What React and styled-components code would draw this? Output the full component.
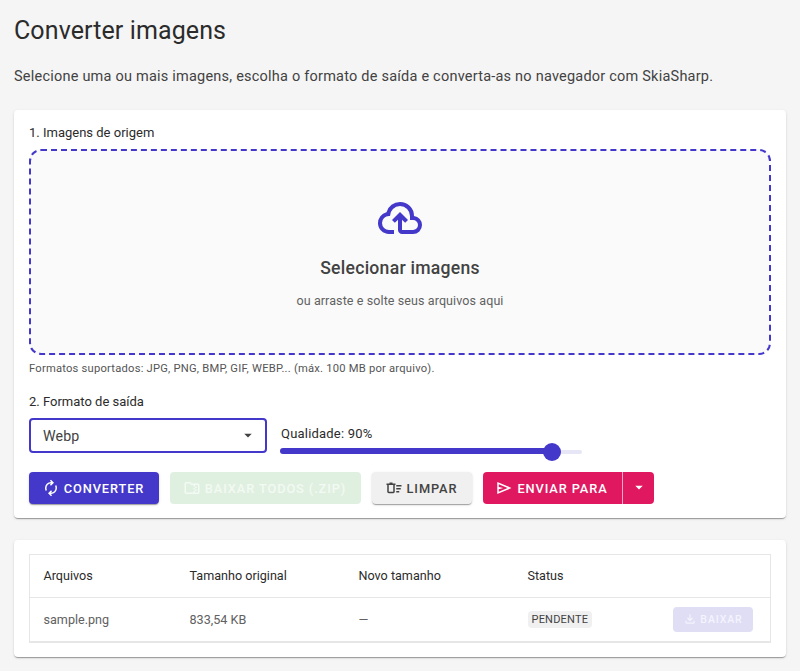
import React from 'react';
import styled, { createGlobalStyle } from 'styled-components';

const PRIMARY = '#4338ca';

const GlobalStyle = createGlobalStyle`
  html, body { margin: 0; padding: 0; background: #f5f5f5; }
  body { font-family: Roboto, "Liberation Sans", sans-serif; color: #424242; }
`;

const Page = styled.main`
  padding: 14px 14px 14px;
  display: flex;
  flex-direction: column;
`;

const Title = styled.h1`
  margin: 0;
  font-size: 25px;
  line-height: 34px;
  font-weight: 400;
  letter-spacing: 0.1px;
  color: #2b2b2b;
`;

const Intro = styled.p`
  margin: 18px 0 0;
  font-size: 14.5px;
  line-height: 22px;
  letter-spacing: 0.22px;
  color: #424242;
`;

const Card = styled.section`
  background: #fff;
  border-radius: 4px;
  box-shadow: 0 2px 1px -1px rgba(0,0,0,.2), 0 1px 1px 0 rgba(0,0,0,.14), 0 1px 3px 0 rgba(0,0,0,.12);
  padding: 14px 15px;
  margin-top: ${(p) => p.$top}px;
`;

const SectionLabel = styled.div`
  font-size: 13px;
  line-height: 18px;
  color: #2b2b2b;
`;

const DropZone = styled.div`
  margin-top: 7px;
  height: 206px;
  box-sizing: border-box;
  border: 2px dashed ${PRIMARY};
  border-radius: 12px;
  background: #fafafa;
  display: flex;
  flex-direction: column;
  align-items: center;
  color: ${PRIMARY};
`;

const ZoneIcon = styled.svg`
  width: 48px;
  height: 48px;
  margin-top: 43px;
  fill: currentColor;
`;

const ZoneTitle = styled.div`
  margin-top: 14px;
  font-size: 17.6px;
  line-height: 24px;
  font-weight: 500;
  letter-spacing: 0.25px;
  color: #424242;
`;

const ZoneHint = styled.div`
  margin-top: 11px;
  font-size: 12.5px;
  line-height: 20px;
  letter-spacing: 0.1px;
  color: #616161;
`;

const Helper = styled.div`
  margin-top: 6px;
  font-size: 11.2px;
  line-height: 16px;
  letter-spacing: 0.22px;
  color: #555;
`;

const FormatLabel = styled(SectionLabel)`
  margin-top: 16px;
`;

const FormatRow = styled.div`
  margin-top: 7px;
  display: flex;
  gap: 13px;
  align-items: stretch;
`;

const SelectBox = styled.div`
  width: 238px;
  height: 35px;
  box-sizing: border-box;
  border: 2px solid ${PRIMARY};
  border-radius: 4px;
  display: flex;
  align-items: center;
  justify-content: space-between;
  padding: 0 8px 0 12px;
  font-size: 14.2px;
  letter-spacing: 0.15px;
  color: #424242;
`;

const Caret = styled.svg`
  width: 18px;
  height: 18px;
  fill: ${(p) => p.$color || '#424242'};
  flex: none;
`;

const Quality = styled.div`
  width: 302px;
  display: flex;
  flex-direction: column;
  justify-content: space-between;
`;

const QualityLabel = styled.div`
  font-size: 13px;
  line-height: 18px;
  letter-spacing: 0.2px;
  margin-top: 7px;
  padding-left: 1px;
  color: #2b2b2b;
`;

const Track = styled.div`
  position: relative;
  height: 4px;
  margin-bottom: -1px;
  border-radius: 2px;
  background: #e7e6f7;
`;

const TrackFill = styled.div`
  height: 6px;
  margin-top: -1px;
  position: relative;
  top: -1px;
  border-radius: 3px;
  background: ${PRIMARY};
`;

const Thumb = styled.div`
  position: absolute;
  top: -7px;
  width: 18px;
  height: 18px;
  margin-left: -9px;
  border-radius: 50%;
  background: ${PRIMARY};
`;

const Actions = styled.div`
  margin-top: 19px;
  display: flex;
  gap: 11px;
`;

const Button = styled.button`
  height: 32px;
  width: ${(p) => p.$width}px;
  box-sizing: border-box;
  border: 0;
  border-radius: 4px;
  padding: 0 2px 0 0;
  display: flex;
  align-items: center;
  justify-content: center;
  gap: 4px;
  font-family: inherit;
  font-size: 12.8px;
  font-weight: 500;
  letter-spacing: 0.9px;
  text-transform: uppercase;
  background: ${(p) => p.$bg};
  color: ${(p) => p.$fg};
  box-shadow: ${(p) => (p.$flat ? 'none' : '0 2px 1px -1px rgba(0,0,0,.2), 0 1px 1px 0 rgba(0,0,0,.14), 0 1px 3px 0 rgba(0,0,0,.12)')};
`;

const BtnIcon = styled.svg`
  width: 18px;
  height: 18px;
  fill: currentColor;
  flex: none;
`;

const SplitGroup = styled.div`
  display: flex;
`;

const SplitMain = styled(Button)`
  border-radius: 4px 0 0 4px;
  box-shadow: none;
`;

const SplitToggle = styled(Button)`
  border-radius: 0 4px 4px 0;
  border-left: 1px solid #f6a9c4;
  padding: 0;
  box-shadow: none;
`;

const TableFrame = styled.div`
  border: 1px solid #e6e6e6;
  border-bottom-width: 2px;
`;

const Table = styled.table`
  width: 100%;
  border-collapse: collapse;
  table-layout: fixed;
  font-size: 12.6px;
`;

const HeadCell = styled.th`
  width: ${(p) => (p.$width ? `${p.$width}px` : 'auto')};
  box-sizing: border-box;
  height: 42px;
  padding: 0 0 0 13.5px;
  text-align: left;
  font-weight: 400;
  color: #2b2b2b;
  border-bottom: 1px solid #e6e6e6;
`;

const Cell = styled.td`
  box-sizing: border-box;
  height: 44px;
  padding: 0 0 0 13.5px;
  color: #616161;
`;

const ActionCell = styled(Cell)`
  padding: 0 17px 0 0;
`;

const Chip = styled.span`
  display: inline-block;
  padding: 0 4px;
  height: 17px;
  line-height: 17px;
  border-radius: 4px;
  background: #f0f0f0;
  color: #424242;
  font-size: 11px;
  letter-spacing: 0.2px;
`;

const SmallButton = styled(Button)`
  height: 25px;
  margin-left: auto;
  padding: 0;
  font-size: 10.5px;
  gap: 3px;
`;

const SmallIcon = styled(BtnIcon)`
  width: 14px;
  height: 14px;
`;

// material symbols, viewBox 0 -960 960 960
const icons = {
  cloud: 'M260-160q-91 0-155.5-63T40-377q0-78 47-139t123-78q25-92 100-149t170-57q117 0 198.5 81.5T760-520q69 8 114.5 59.5T920-340q0 75-52.5 127.5T740-160H520q-33 0-56.5-23.5T440-240v-206l-64 62-56-56 160-160 160 160-56 56-64-62v206h220q42 0 71-29t29-71q0-42-29-71t-71-29h-60v-80q0-83-58.5-141.5T480-720q-83 0-141.5 58.5T280-520h-20q-58 0-99 41t-41 99q0 58 41 99t99 41h100v80H260Z',
  renew: 'M204-318q-22-38-33-78t-11-82q0-134 93-228t227-94h7l-64-64 56-56 160 160-160 160-56-56 64-64h-7q-100 0-170 70.5T240-478q0 26 6 51t18 49l-60 60ZM481-40 321-200l160-160 56 56-64 64h7q100 0 170-70.5T720-482q0-26-6-51t-18-49l60-60q22 38 33 78t11 82q0 134-93 228t-227 94h-7l64 64-56 56Z',
  zip: 'M160-160q-33 0-56.5-23.5T80-240v-480q0-33 23.5-56.5T160-800h240l80 80h320q33 0 56.5 23.5T880-640v400q0 33-23.5 56.5T800-160H160ZM160-240h400v-80h80v-80h-80v-80h80v-80h-80v-80H447l-80-80H160v480ZM640-240h160v-400H640v80h80v80h-80v80h80v80h-80v160Z',
  sweep: 'M600-240v-80h160v80H600Zm0-320v-80h280v80H600Zm0 160v-80h240v80H600ZM120-640H80v-80h160v-60h160v60h160v80h-40v360q0 33-23.5 56.5T440-200H200q-33 0-56.5-23.5T120-280v-360Zm80 0v360h240v-360H200Z',
  send: 'M120-160v-640l760 320-760 320Zm80-120 474-200-474-200v140l240 60-240 60v140Z',
  drop: 'M280-600l200 200 200-200H280Z',
  download: 'M480-320 280-520l56-58 104 104v-326h80v326l104-104 56 58-200 200ZM240-160q-33 0-56.5-23.5T160-240v-120h80v120h480v-120h80v120q0 33-23.5 56.5T720-160H240Z',
};

function Glyph({ as: Svg = BtnIcon, name, ...rest }) {
  return (
    <Svg viewBox="0 -960 960 960" {...rest}>
      <path d={icons[name]} fillRule="evenodd" />
    </Svg>
  );
}

function App() {
  const quality = 90;
  return (
    <Page>
      <GlobalStyle />
      <Title>Converter imagens</Title>
      <Intro>Selecione uma ou mais imagens, escolha o formato de saída e converta-as no navegador com SkiaSharp.</Intro>

      <Card $top={22}>
        <SectionLabel>1. Imagens de origem</SectionLabel>
        <DropZone>
          <Glyph as={ZoneIcon} name="cloud" />
          <ZoneTitle>Selecionar imagens</ZoneTitle>
          <ZoneHint>ou arraste e solte seus arquivos aqui</ZoneHint>
        </DropZone>
        <Helper>Formatos suportados: JPG, PNG, BMP, GIF, WEBP... (máx. 100 MB por arquivo).</Helper>

        <FormatLabel>2. Formato de saída</FormatLabel>
        <FormatRow>
          <SelectBox>
            Webp
            <Glyph as={Caret} name="drop" />
          </SelectBox>
          <Quality>
            <QualityLabel>Qualidade: {quality}%</QualityLabel>
            <Track>
              <TrackFill style={{ width: `${quality}%` }} />
              <Thumb style={{ left: `${quality}%` }} />
            </Track>
          </Quality>
        </FormatRow>

        <Actions>
          <Button $width={130} $bg={PRIMARY} $fg="#fff">
            <Glyph name="renew" />
            Converter
          </Button>
          <Button $width={191} $bg="#dff0e0" $fg="#f3f9f3" $flat disabled>
            <Glyph name="zip" />
            Baixar todos (.zip)
          </Button>
          <Button $width={100} $bg="#f0f0f0" $fg="#424242">
            <Glyph name="sweep" />
            Limpar
          </Button>
          <SplitGroup>
            <SplitMain $width={139} $bg="#e0185f" $fg="#fff">
              <Glyph name="send" />
              Enviar para
            </SplitMain>
            <SplitToggle $width={32} $bg="#e0185f" $fg="#fff">
              <Glyph as={Caret} name="drop" $color="#fff" />
            </SplitToggle>
          </SplitGroup>
        </Actions>
      </Card>

      <Card $top={22}>
        <TableFrame>
          <Table>
            <thead>
              <tr>
                <HeadCell $width={146}>Arquivos</HeadCell>
                <HeadCell $width={169}>Tamanho original</HeadCell>
                <HeadCell $width={169}>Novo tamanho</HeadCell>
                <HeadCell $width={130}>Status</HeadCell>
                <HeadCell />
              </tr>
            </thead>
            <tbody>
              <tr>
                <Cell>sample.png</Cell>
                <Cell>833,54 KB</Cell>
                <Cell>—</Cell>
                <Cell><Chip>PENDENTE</Chip></Cell>
                <ActionCell>
                  <SmallButton $width={80} $bg="#dfdef5" $fg="#f4f4fc" $flat disabled>
                    <Glyph as={SmallIcon} name="download" />
                    Baixar
                  </SmallButton>
                </ActionCell>
              </tr>
            </tbody>
          </Table>
        </TableFrame>
      </Card>
    </Page>
  );
}

export default App;
